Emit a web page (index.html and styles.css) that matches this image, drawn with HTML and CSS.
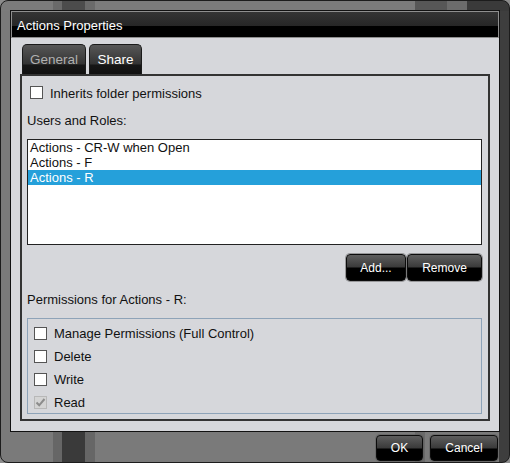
FILE: index.html
```html
<!DOCTYPE html>
<html>
<head>
<meta charset="utf-8">
<link rel="stylesheet" href="styles.css">
</head>
<body>
<div class="frame">
  <div class="dialog">
    <div class="titlebar"><span class="title">Actions Properties</span></div>
    <div class="content">
      <div class="tabs">
        <div class="tab tab-general">General</div>
        <div class="tab tab-share active">Share</div>
      </div>
      <div class="panel">
        <label class="check-row inherit">
          <span class="box"></span>
          <span class="lbl">Inherits folder permissions</span>
        </label>
        <div class="section-label users-label">Users and Roles:</div>
        <div class="listbox">
          <div class="item">Actions - CR-W when Open</div>
          <div class="item">Actions - F</div>
          <div class="item selected">Actions - R</div>
        </div>
        <div class="btn-row">
          <button class="btn btn-add">Add...</button>
          <button class="btn btn-remove">Remove</button>
        </div>
        <div class="section-label perm-label">Permissions for Actions - R:</div>
        <div class="group">
          <label class="check-row perm"><span class="box"></span><span class="lbl">Manage Permissions (Full Control)</span></label>
          <label class="check-row perm"><span class="box"></span><span class="lbl">Delete</span></label>
          <label class="check-row perm"><span class="box"></span><span class="lbl">Write</span></label>
          <label class="check-row perm"><span class="box disabled"><svg width="11" height="11" viewBox="0 0 11 11"><path d="M1.5 5.5 L4.2 8.3 L9.5 2" fill="none" stroke="#8c8c8c" stroke-width="2"/></svg></span><span class="lbl">Read</span></label>
        </div>
      </div>
    </div>
  </div>
  <div class="footer">
    <button class="btn btn-ok">OK</button>
    <button class="btn btn-cancel">Cancel</button>
  </div>
</div>
</body>
</html>
```
FILE: styles.css
```css
html, body {
  margin: 0;
  padding: 0;
}
body {
  width: 510px;
  height: 463px;
  background: #8c8c8c;
  font-family: "Liberation Sans", Arial, sans-serif;
  overflow: hidden;
}
.frame {
  box-sizing: border-box;
  width: 510px;
  height: 463px;
  border: 1px solid #1c1c1c;
  border-radius: 8px;
  padding: 9px 9px 0 9px;
  background:
    linear-gradient(to right, #7b7b7b 0 52px, #6a6a6a 52px 61px, #4c4c4c 61px 84px, #6a6a6a 84px 94px, #7b7b7b 94px 414px, #575757 414px 446px, #6c6c6c 446px 466px, #3a3a3a 466px) top left / 100% 10px no-repeat,
    linear-gradient(to right, #7a7a7a 0 52px, #666 52px 61px, #3a3a3a 61px 84px, #666 84px 94px, #7a7a7a 94px 414px, #6a6a6a 414px 424px, #7a7a7a 424px 498px, #3e3e3e 498px) bottom left / 100% 32px no-repeat,
    linear-gradient(to right, #7a7a7a 0 498px, #3e3e3e 498px);
}
.dialog {
  width: 490px;
  height: 422px;
  box-sizing: border-box;
  border: 1px solid #111;
  display: flex;
  flex-direction: column;
  background: #d6d7db;
}
.titlebar {
  height: 27px;
  box-sizing: border-box;
  border: 1px solid #8e8e8e;
  background: linear-gradient(to bottom, #343434 0, #262626 14px, #000 14px, #000 100%);
  display: flex;
  align-items: center;
  padding-left: 5px;
}
.title {
  color: #fff;
  font-size: 13px;
  position: relative;
  top: 1px;
}
.content {
  flex: 1;
  padding: 6px 9px 10px 9px;
  display: flex;
  flex-direction: column;
}
.tabs {
  display: flex;
  gap: 3px;
  padding-left: 2px;
  height: 30px;
}
.tab {
  box-sizing: border-box;
  height: 30px;
  border: 1px solid #1a1a1a;
  border-bottom: none;
  border-radius: 5px 5px 0 0;
  background: linear-gradient(to bottom, #575757 0, #333 19px, #161616 20px, #111 100%);
  font-size: 13.5px;
  display: flex;
  align-items: center;
  justify-content: center;
}
.tab-general {
  width: 64px;
  color: #b0b0b0;
}
.tab-share {
  width: 53px;
  color: #fff;
}
.panel {
  flex: 1;
  box-sizing: border-box;
  border: 2px solid #333;
  padding: 0 6px 0 5px;
  display: flex;
  flex-direction: column;
}
.check-row {
  display: flex;
  align-items: center;
  gap: 7px;
  font-size: 13px;
  color: #111;
}
.box {
  width: 13px;
  height: 13px;
  box-sizing: border-box;
  border: 1px solid #555;
  background: #fff;
  display: flex;
  align-items: center;
  justify-content: center;
  flex: none;
}
.box.disabled {
  border-color: #b8b8b8;
  background: #d4d4d4;
}
.inherit {
  margin-top: 9px;
  margin-left: 3px;
  height: 15px;
}
.inherit .lbl {
  position: relative;
  top: 1px;
}
.section-label {
  font-size: 13px;
  color: #111;
  line-height: 16px;
  height: 16px;
}
.users-label {
  margin-top: 13px;
}
.listbox {
  margin-top: 10px;
  height: 106px;
  box-sizing: border-box;
  border: 1px solid #222;
  background: #fff;
}
.item {
  height: 15px;
  line-height: 15px;
  font-size: 13px;
  color: #111;
  padding-left: 2px;
}
.item.selected {
  background: #25a0da;
  color: #fff;
}
.btn-row {
  margin-top: 9px;
  display: flex;
  justify-content: flex-end;
  gap: 1px;
}
.btn {
  box-sizing: border-box;
  height: 27px;
  border: 1px solid #0c0c0c;
  border-radius: 4px;
  background: linear-gradient(to bottom, #5e5e5e 0, #3a3a3a 12px, #000 13px, #000 100%);
  color: #fff;
  font-family: "Liberation Sans", Arial, sans-serif;
  font-size: 12px;
  padding: 0;
  box-shadow: 0 0 0 1px rgba(90, 90, 90, 0.5);
}
.btn-add { width: 60px; }
.btn-remove { width: 75px; }
.perm-label {
  margin-top: 11px;
}
.group {
  margin-top: 10px;
  height: 96px;
  box-sizing: border-box;
  border: 1px solid #8ea3b8;
  padding: 3px 6px 0 6px;
  display: flex;
  flex-direction: column;
}
.perm {
  height: 23px;
  flex: none;
}
.footer {
  display: flex;
  justify-content: flex-end;
  gap: 7px;
  margin-top: 3px;
  padding-right: 2px;
}
.btn-ok { width: 47px; height: 26px; }
.btn-cancel { width: 68px; height: 26px; }
```
